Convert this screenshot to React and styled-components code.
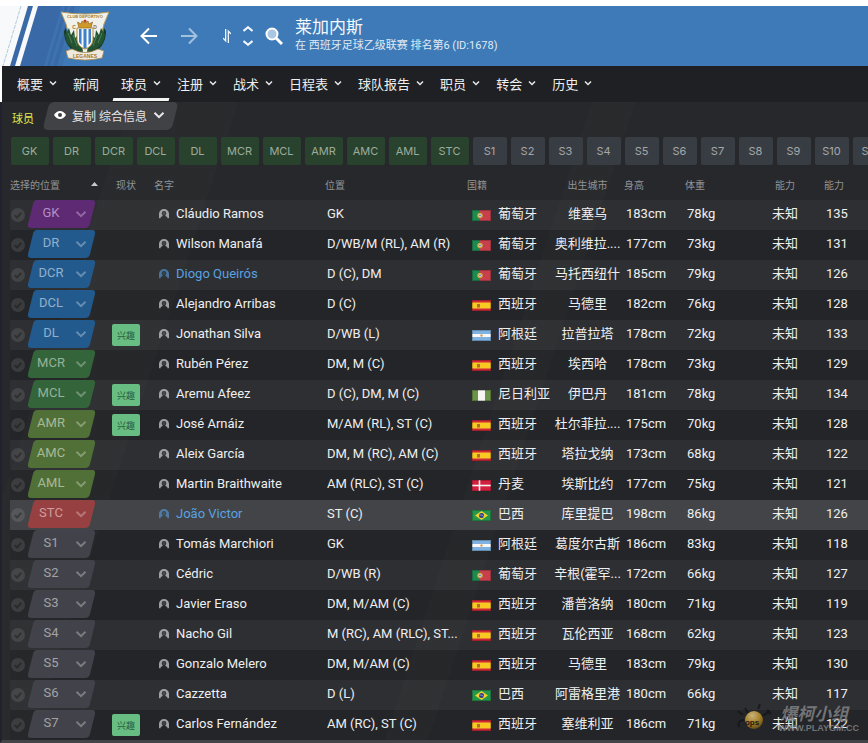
import React, { useState } from "react";
import styled, { createGlobalStyle } from "styled-components";

const players = [
  ["GK", "Cláudio Ramos", "GK", "pt", "维塞乌", 183, 78, 135],
  ["DR", "Wilson Manafá", "D/WB/M (RL), AM (R)", "pt", "奥利维拉....", 177, 73, 131],
  ["DCR", "Diogo Queirós", "D (C), DM", "pt", "马托西纽什", 185, 79, 126, "linked"],
  ["DCL", "Alejandro Arribas", "D (C)", "es", "马德里", 182, 76, 128],
  ["DL", "Jonathan Silva", "D/WB (L)", "ar", "拉普拉塔", 178, 72, 133, "interest"],
  ["MCR", "Rubén Pérez", "DM, M (C)", "es", "埃西哈", 178, 73, 129],
  ["MCL", "Aremu Afeez", "D (C), DM, M (C)", "ng", "伊巴丹", 181, 78, 134, "interest"],
  ["AMR", "José Arnáiz", "M/AM (RL), ST (C)", "es", "杜尔菲拉....", 175, 70, 128, "interest"],
  ["AMC", "Aleix García", "DM, M (RC), AM (C)", "es", "塔拉戈纳", 173, 68, 122],
  ["AML", "Martin Braithwaite", "AM (RLC), ST (C)", "dk", "埃斯比约", 177, 75, 121],
  ["STC", "João Victor", "ST (C)", "br", "库里提巴", 198, 86, 126, "linked"],
  ["S1", "Tomás Marchiori", "GK", "ar", "葛度尔古斯", 186, 83, 118],
  ["S2", "Cédric", "D/WB (R)", "pt", "辛根(霍罕...", 172, 66, 127],
  ["S3", "Javier Eraso", "DM, M/AM (C)", "es", "潘普洛纳", 180, 71, 119],
  ["S4", "Nacho Gil", "M (RC), AM (RLC), ST...", "es", "瓦伦西亚", 168, 62, 123],
  ["S5", "Gonzalo Melero", "DM, M/AM (C)", "es", "马德里", 183, 79, 130],
  ["S6", "Cazzetta", "D (L)", "br", "阿雷格里港", 180, 66, 117],
  ["S7", "Carlos Fernández", "AM (RC), ST (C)", "es", "塞维利亚", 186, 71, 122, "interest"],
];

const countries = {
  pt: "葡萄牙",
  es: "西班牙",
  ar: "阿根廷",
  ng: "尼日利亚",
  dk: "丹麦",
  br: "巴西",
};

const menus = ["概要", "新闻", "球员", "注册", "战术", "日程表", "球队报告", "职员", "转会", "历史"];

const fieldSlots = ["GK", "DR", "DCR", "DCL", "DL", "MCR", "MCL", "AMR", "AMC", "AML", "STC"];
const benchSlots = ["S1", "S2", "S3", "S4", "S5", "S6", "S7", "S8", "S9", "S10", "S11"];
const allSlots = [...fieldSlots, ...benchSlots];

const slotColor = (slot) => {
  if (slot === "GK") return { bg: "#5e2a73", fg: "#b48fc2" };
  if (/^S\d/.test(slot)) return { bg: "#42424a", fg: "#a2a2a6" };
  if (slot === "STC") return { bg: "#964042", fg: "#d09c9d" };
  if (slot.startsWith("AM")) return { bg: "#517037", fg: "#a9b998" };
  if (slot.startsWith("M")) return { bg: "#346439", fg: "#97b29a" };
  return { bg: "#235a8d", fg: "#92b0cc" };
};

function Chevron({ size = 8, color = "#e8e9ea", width = 2 }) {
  return (
    <svg width={size} height={size} viewBox="0 0 12 12" fill="none" aria-hidden="true">
      <path d="M1.5 3.8 6 8.2 10.5 3.8" stroke={color} strokeWidth={(width * 12) / size} />
    </svg>
  );
}

function Crest() {
  return (
    <svg width="50" height="50" viewBox="0 0 50 50" role="img" aria-label="CD Leganés">
      <path d="M1 1Q25 5 49 1L44 13 38 37 32 46 25 49 18 46 12 37 6 13Z" fill="#f1f1ec" stroke="#b49a5c" strokeWidth="1" />
      <text x="25" y="7" textAnchor="middle" fontSize="4" fontWeight="700" fill="#a67b22" fontFamily="Liberation Sans, sans-serif">CLUB DEPORTIVO</text>
      <text x="14" y="18" textAnchor="middle" fontSize="5" fontWeight="700" fill="#9c7628" fontFamily="Liberation Sans, sans-serif">C</text>
      <text x="35" y="18" textAnchor="middle" fontSize="5" fontWeight="700" fill="#9c7628" fontFamily="Liberation Sans, sans-serif">D</text>
      <path d="M19 17 17.5 11 21 13 22 10 25 12 28 10 29 13 32.5 11 31 17Z" fill="#d09a2a" stroke="#8a5a1a" strokeWidth=".6" />
      <circle cx="25" cy="10" r="1.5" fill="#b8402a" />
      <path d="M6 17Q7 34 23 41L22 44Q4 38 4 20ZM44 17Q43 34 27 41L28 44Q46 38 46 20Z" fill="#173b22" />
      <path d="M5 24 9 17 11 24 14 19 15 27 17 25 18 32 22 34 23 41 14 38 7 32ZM45 24 41 17 39 24 36 19 35 27 33 25 32 32 28 34 27 41 36 38 43 32Z" fill="#245333" />
      <path d="M8 22 12 32M13 24 17 35M42 22 38 32M37 24 33 35" stroke="#4a8055" strokeWidth="1" />
      <path d="M17 17h16v12q-1 7-8 9-7-2-8-9Z" fill="#f5f8fc" stroke="#b78c35" strokeWidth="1" />
      <path d="M19 18h2.5v16L19 31ZM23.5 18h3v19l-1.5.6-1.5-.6ZM28.5 18H31v13l-2.5 3Z" fill="#3f7fc6" />
      <path d="M6 40 12 38Q25 45 38 38L44 40 42 47Q25 51 8 47Z" fill="#eeeae0" stroke="#a7884d" strokeWidth=".8" />
      <text x="25" y="47" textAnchor="middle" fontSize="5" fontWeight="700" fill="#a9782a" fontFamily="Liberation Sans, sans-serif">LEGANES</text>
    </svg>
  );
}

// 左上角斜条
function Stripes() {
  return (
    <StripeArt width="80" height="60" viewBox="0 0 80 60" aria-hidden="true">
      <path d="M0 0H80L62 60H0Z" fill="#3a69a8" />
      <path d="M62 0h3L47 60h-3ZM68 0h3L53 60h-3ZM75 0h5L62 60h-5Z" fill="#3d7ab6" opacity=".6" />
      <path d="M0 0H28L10 60H0Z" fill="#f8f9fa" />
      <path d="M33 0h5L20 60h-5Z" fill="#f8f9fa" />
      <path d="M21 0 3 60" stroke="#b3c9df" strokeDasharray="4 1" />
    </StripeArt>
  );
}

function Flag({ code }) {
  return (
    <svg width="19" height="11" viewBox="0 0 19 11" aria-hidden="true">
      {code === "pt" && (
        <>
          <path d="M0 0h8v11H0z" fill="#1f8a50" />
          <path d="M8 0h11v11H8z" fill="#c8404c" />
          <circle cx="8" cy="5.5" r="2.8" fill="#c9a637" />
          <circle cx="8" cy="5.5" r="1.5" fill="#d9dbe6" />
          <circle cx="8" cy="5.5" r=".8" fill="#4a5fb0" />
        </>
      )}
      {code === "es" && (
        <>
          <path d="M0 0h19v11H0z" fill="#cf2837" />
          <path d="M0 2.5h19v6H0z" fill="#f8c922" />
          <path d="M5 4h3v3.5H5z" fill="#b0702c" />
        </>
      )}
      {code === "ar" && (
        <>
          <path d="M0 0h19v11H0z" fill="#7fb2e0" />
          <path d="M0 4h19v3H0z" fill="#f7f8f9" />
          <circle cx="9.5" cy="5.5" r="1.2" fill="#d9a050" />
        </>
      )}
      {code === "ng" && (
        <>
          <path d="M0 0h19v11H0z" fill="#6b9447" />
          <path d="M6 0h7v11H6z" fill="#f5f5f2" />
        </>
      )}
      {code === "dk" && (
        <>
          <path d="M0 0h19v11H0z" fill="#d3203f" />
          <path d="M7 0h1v11H7zM0 5h19v1H0z" fill="#f7f2f2" stroke="#f7f2f2" strokeWidth=".6" />
        </>
      )}
      {code === "br" && (
        <>
          <path d="M0 0h19v11H0z" fill="#25964a" />
          <path d="M9.5 1 16 5.5 9.5 10 3 5.5z" fill="#f0d22f" />
          <circle cx="9.5" cy="5.5" r="2.5" fill="#29398a" />
          <path d="M7.3 5Q10 4.7 11.7 6.4" stroke="#d8deee" strokeWidth=".6" fill="none" />
        </>
      )}
      <path d="M.5.5h18v10H.5z" fill="none" stroke="#000" strokeOpacity=".22" />
    </svg>
  );
}

function Tick() {
  return (
    <svg width="14" height="14" viewBox="0 0 14 14" aria-hidden="true">
      <circle cx="7" cy="7" r="7" fill="#fff" fillOpacity=".1" />
      <path d="M3.8 7.3 6.1 9.5 10.2 4.8" stroke="#000" strokeOpacity=".3" strokeWidth="2" fill="none" />
    </svg>
  );
}

// 圆形底 + 镂空头像
function Person() {
  return (
    <svg width="10" height="10" viewBox="0 0 10 10" aria-hidden="true">
      <path
        fill="currentColor"
        d="M5 0a5 5 0 0 1 5 5v4L8.800 9.500Q8.600 7.600 6.400 7V6.200Q7.300 5.400 7.300 4.200 7.300 2 5 2 2.700 2 2.700 4.200 2.700 5.400 3.600 6.200V7Q1.400 7.600 1.200 9.500L0 9V5A5 5 0 0 1 5 0Z"
      />
      <path fill="currentColor" fillOpacity=".25" d="M3.4 4.2a1.6 1.6 0 0 1 3.2 0 1.6 2 0 0 1-3.2 0Z" />
    </svg>
  );
}

function SlotSelect({ slot, name }) {
  const [value, setValue] = useState(slot);
  const color = slotColor(value);

  return (
    <SlotBox>
      <SlotShape width="67" height="28" viewBox="0 0 67 28" preserveAspectRatio="none" aria-hidden="true">
        <path d="M9 0H64Q68 0 67 4L62 24Q61 28 57 28H3Q-1 28 0 24L5 4Q6 0 9 0Z" fill={color.bg} />
      </SlotShape>
      <SlotField $fg={color.fg} aria-label={`${name} 位置`} value={value} onChange={(e) => setValue(e.target.value)}>
        {allSlots.map((s) => (
          <option key={s}>{s}</option>
        ))}
      </SlotField>
      <SlotArrow>
        <Chevron size={12} color={color.fg} width={2} />
      </SlotArrow>
    </SlotBox>
  );
}

function PlayerRow({ player }) {
  const [slot, name, role, nation, city, height, weight, ability, flag] = player;
  const [checked, setChecked] = useState(false);

  return (
    <Row $selected={slot === "STC"}>
      <ControlCell>
        <SlotCell>
          <CheckLabel>
            <input type="checkbox" aria-label={name} checked={checked} onChange={() => setChecked(!checked)} />
            <Tick />
          </CheckLabel>
          <SlotSelect slot={slot} name={name} />
        </SlotCell>
      </ControlCell>
      <ControlCell>{flag === "interest" && <Interest>兴趣</Interest>}</ControlCell>
      <Cell>
        <NameLink href="#" $linked={flag === "linked"}>
          <Person />
          <span>{name}</span>
        </NameLink>
      </Cell>
      <Cell>{role}</Cell>
      <Cell>
        <Nation>
          <Flag code={nation} />
          {countries[nation]}
        </Nation>
      </Cell>
      <Cell $center>{city}</Cell>
      <Cell>{height}cm</Cell>
      <Cell>{weight}kg</Cell>
      <Cell $center>未知</Cell>
      <Cell>{ability}</Cell>
    </Row>
  );
}

function App() {
  return (
    <Page>
      <GlobalStyle />
      <Header>
        <Stripes />
        <Crest />
        <HistoryButtons>
          <IconButton aria-label="后退">
            <svg width="18" height="18" viewBox="0 0 18 18" fill="none" stroke="#fff" strokeWidth="2">
              <path d="M17 9H2M9 1.5 1.5 9 9 16.5" />
            </svg>
          </IconButton>
          <IconButton aria-label="前进">
            <svg width="18" height="18" viewBox="0 0 18 18" fill="none" stroke="#a3c1df" strokeWidth="2">
              <path d="M1 9h15M9 1.5 16.5 9 9 16.5" />
            </svg>
          </IconButton>
        </HistoryButtons>
        <ToolButtons>
          <IconButton aria-label="切换">
            <svg width="8" height="14" viewBox="0 0 8 14" fill="#eef4fa">
              <path d="M2 0h1.300v13.500L0 10V8.500l2 1.500ZM6 14H4.700V.5L8 4v1.500L6 4Z" />
            </svg>
          </IconButton>
          <IconButton aria-label="上下">
            <svg width="10" height="20" viewBox="0 0 10 20" fill="none" stroke="#f4f8fc" strokeWidth="2">
              <path d="M.5 5 5 1.2 9.5 5M.5 15 5 18.8 9.5 15" />
            </svg>
          </IconButton>
          <IconButton aria-label="搜索">
            <svg width="18" height="18" viewBox="0 0 18 18">
              <path d="M11 11 17 17" stroke="#fff" strokeWidth="3" />
              <circle cx="7" cy="7" r="5.5" fill="#a9c6e2" stroke="#fff" strokeWidth="2" />
            </svg>
          </IconButton>
        </ToolButtons>
        <Title>
          <h1>莱加内斯</h1>
          <p>在 西班牙足球乙级联赛 排名第6 (ID:1678)</p>
        </Title>
      </Header>

      <Nav>
        {menus.map((menu) => (
          <NavLink key={menu} href="#" $active={menu === "球员"}>
            <span>{menu}</span>
            {menu !== "新闻" && <Chevron width={1.5} />}
          </NavLink>
        ))}
      </Nav>

      <Main>
        <ViewBar>
          <ViewTitle>球员</ViewTitle>
          <ViewButton>
            <svg width="12" height="10" viewBox="0 0 12 10" aria-hidden="true">
              <path d="M0 5Q2.5 1 6 1T12 5Q9.5 9 6 9T0 5Z" fill="#fff" />
              <circle cx="6" cy="5" r="2" fill="#3f4044" />
            </svg>
            <span>复制 综合信息</span>
            <Chevron size={12} />
          </ViewButton>
        </ViewBar>

        <Slots>
          {fieldSlots.map((slot) => (
            <SlotChip key={slot} $field>{slot}</SlotChip>
          ))}
          {benchSlots.map((slot) => (
            <SlotChip key={slot}>{slot}</SlotChip>
          ))}
        </Slots>

        <Squad>
          <colgroup>
            <col style={{ width: 102 }} />
            <col style={{ width: 40 }} />
            <col style={{ width: 171 }} />
            <col style={{ width: 142 }} />
            <col style={{ width: 88 }} />
            <col style={{ width: 69 }} />
            <col style={{ width: 61 }} />
            <col style={{ width: 65 }} />
            <col style={{ width: 74 }} />
            <col />
          </colgroup>
          <thead>
            <tr>
              <Head>
                <SortHead>
                  选择的位置
                  <svg width="7" height="4" viewBox="0 0 7 4" aria-hidden="true">
                    <path d="M0 4 3.5 0 7 4Z" fill="#c9cacc" />
                  </svg>
                </SortHead>
              </Head>
              <Head>
                <StatusHead>现状</StatusHead>
              </Head>
              <Head>名字</Head>
              <Head>位置</Head>
              <Head>国籍</Head>
              <Head $center>出生城市</Head>
              <Head>身高</Head>
              <Head>体重</Head>
              <Head $center>能力</Head>
              <Head>能力</Head>
            </tr>
          </thead>
          <tbody>
            {players.map((player) => (
              <PlayerRow key={player[0]} player={player} />
            ))}
          </tbody>
        </Squad>
      </Main>

      <Watermark>
        <svg width="36" height="32" viewBox="0 0 36 32" aria-hidden="true">
          <defs>
            <radialGradient id="ball" cx=".4" cy=".25" r=".8">
              <stop offset="0" stopColor="#f0d68e" />
              <stop offset=".55" stopColor="#c9982a" />
              <stop offset="1" stopColor="#6a4d13" />
            </radialGradient>
          </defs>
          <path d="M9 5 12 10M22 6 24 1M2 8 7 12M25 14 34 8M31 7l4 4M3 24Q1 17 8 17" stroke="#151618" strokeWidth="2" fill="none" />
          <circle cx="18" cy="17" r="9" fill="url(#ball)" />
          <text x="16" y="22" textAnchor="middle" fontSize="8" fontWeight="700" fontFamily="Liberation Sans, sans-serif" fill="#18150e">ops</text>
        </svg>
        <div>
          <strong>爆柯小组</strong>
          <small>WWW.PLAYGM.CC</small>
        </div>
      </Watermark>
    </Page>
  );
}

const GlobalStyle = createGlobalStyle`
  * {
    box-sizing: border-box;
  }

  body {
    margin: 0;
    background: #fff;
    font-family: Roboto, "Noto Sans CJK SC", sans-serif;
    font-size: 13px;
    color: #eeeff0;
  }

  button, select {
    font-family: inherit;
  }

  a {
    color: inherit;
    text-decoration: none;
  }
`;

const Page = styled.div`
  position: relative;
  display: flex;
  flex-direction: column;
  height: 100vh;
  padding-top: 6px;
  overflow: hidden;
`;

// 1.顶部球队栏
const Header = styled.header`
  position: relative;
  display: flex;
  flex: none;
  align-items: center;
  height: 60px;
  padding-left: 60px;
  background: #3d7ab7;

  > * {
    position: relative;
  }
`;

const StripeArt = styled.svg`
  && {
    position: absolute;
    left: 0;
    top: 0;
  }
`;

const IconButton = styled.button`
  display: flex;
  padding: 0;
  border: none;
  background: none;
  cursor: pointer;
`;

const HistoryButtons = styled.div`
  display: flex;
  gap: 22px;
  margin-left: 30px;
`;

const ToolButtons = styled.div`
  display: flex;
  align-items: center;
  gap: 12px;
  margin-left: 25px;
`;

const Title = styled.div`
  margin-left: 12px;

  h1 {
    margin: 0;
    font-size: 17px;
    line-height: 20px;
    font-weight: 400;
    color: #f3f7fb;
  }

  p {
    margin: 0;
    font-size: 11px;
    line-height: 18px;
    color: #dfeaf4;
  }
`;

// 2.主菜单
const Nav = styled.nav`
  display: flex;
  flex: none;
  height: 36px;
  margin-left: 2px;
  padding-left: 7px;
  background: #1f2023;
`;

const NavLink = styled.a`
  position: relative;
  display: flex;
  align-items: center;
  padding: 0 8px 2px;
  white-space: nowrap;

  span {
    margin-right: 6px;
  }

  &::after {
    content: "";
    display: ${(props) => (props.$active ? "block" : "none")};
    position: absolute;
    left: 0;
    right: 0;
    bottom: 1px;
    height: 3px;
    background: #f4f4f4;
    transform: skewX(-14deg);
  }
`;

const Main = styled.main`
  flex: 1;
  min-height: 0;
  overflow: hidden;
  padding-left: 8px;
  border-left: 2px solid #22222e;
  background:
    linear-gradient(108deg, transparent 12%, rgba(255, 255, 255, 0.01) 12% 22%, transparent 22% 55%, rgba(255, 255, 255, 0.01) 55% 59%, transparent 59%),
    #27282b;
  border-bottom: 3px solid #434447;
`;

// 3.视图切换
const ViewBar = styled.div`
  display: flex;
  align-items: center;
  height: 28px;
`;

const ViewTitle = styled.h2`
  margin: 4px 13px 0 2px;
  font-size: 11px;
  font-weight: 400;
  color: #e2ea4a;
`;

const ViewButton = styled.button`
  position: relative;
  z-index: 0;
  display: flex;
  align-items: center;
  gap: 6px;
  height: 28px;
  padding: 0 10px 2px 7px;
  border: none;
  background: none;
  color: #e6e6e7;
  font-size: 12px;

  &::before {
    content: "";
    position: absolute;
    z-index: -1;
    inset: 0 0 0 -1px;
    border-radius: 5px;
    background: #414246;
    transform: skewX(-14deg);
  }
`;

// 4.位置按钮
const Slots = styled.div`
  display: flex;
  gap: 4px;
  margin-top: 7px;
  padding-left: 1px;
  overflow: hidden;
`;

const SlotChip = styled.button`
  flex: none;
  width: ${(props) => (props.$field ? "38px" : "34px")};
  height: 28px;
  padding: 0 1px 0 0;
  border: none;
  border-radius: 2px;
  background: ${(props) => (props.$field ? "#29422d" : "#383d43")};
  color: ${(props) => (props.$field ? "#9bac9d" : "#a5a8ab")};
  font-family: Inter, sans-serif;
  font-size: 11px;
`;

// 5.球员表格
const Squad = styled.table`
  width: 100%;
  table-layout: fixed;
  border-collapse: collapse;
`;

const Head = styled.th`
  height: 35px;
  padding: 3px 2px 0;
  font-size: 10px;
  font-weight: 400;
  color: #929395;
  text-align: ${(props) => (props.$center ? "center" : "left")};
  white-space: nowrap;

  &:first-child {
    padding-left: 0;
  }
`;

const SortHead = styled.div`
  display: flex;
  align-items: center;
  justify-content: space-between;
  padding-right: 12px;
`;

const StatusHead = styled.div`
  padding-left: 2px;
`;

const Row = styled.tr`
  background: rgba(0, 0, 0, 0.06);

  &:nth-child(odd) {
    background: rgba(255, 255, 255, 0.035);
  }

  && {
    ${(props) => props.$selected && "background: #434447;"}
  }
`;

const Cell = styled.td`
  height: 30px;
  padding: ${(props) => (props.$center ? "0 0 2px" : "0 0 2px 4px")};
  overflow: hidden;
  white-space: nowrap;
  line-height: 16px;
  text-align: ${(props) => (props.$center ? "center" : "left")};
`;

const ControlCell = styled.td`
  height: 30px;
  padding: 0;
`;

const SlotCell = styled.div`
  display: flex;
  align-items: center;
  gap: 3px;
  padding-left: 1px;
`;

const CheckLabel = styled.label`
  position: relative;
  display: flex;

  input {
    position: absolute;
    inset: 0;
    margin: 0;
    opacity: 0;
  }
`;

const SlotBox = styled.div`
  position: relative;
  width: 67px;
  height: 28px;
  margin-bottom: 2px;
`;

const SlotShape = styled.svg`
  position: absolute;
  inset: 0;
`;

const SlotField = styled.select`
  position: relative;
  display: block;
  width: 100%;
  height: 26px;
  padding: 0 21px 2px 0;
  appearance: none;
  border: none;
  outline: none;
  background: none;
  color: ${(props) => props.$fg};
  font-size: 13px;
  text-align: center;
  text-align-last: center;
`;

const SlotArrow = styled.span`
  position: absolute;
  right: 8px;
  top: 8px;
  display: flex;
  opacity: 0.6;
  pointer-events: none;
`;

const Interest = styled.span`
  display: flex;
  align-items: center;
  justify-content: center;
  width: 28px;
  height: 22px;
  border-radius: 2px;
  background: #67bd82;
  color: #2b5c3c;
  font-size: 9px;
`;

const NameLink = styled.a`
  display: flex;
  align-items: center;
  gap: 7px;
  padding-left: 3px;
  color: ${(props) => (props.$linked ? "#58a2e2" : "#eeeff0")};

  svg {
    opacity: 0.6;
  }
`;

const Nation = styled.div`
  display: flex;
  align-items: center;
  gap: 7px;
  padding-left: 3px;

  svg {
    margin-top: 2px;
  }
`;

// 6.右下角水印
const Watermark = styled.div`
  position: absolute;
  right: 9px;
  bottom: 8px;
  display: flex;
  align-items: center;
  gap: 6px;
  opacity: 0.8;
  pointer-events: none;
  color: #86878a;

  strong, small {
    display: block;
  }

  strong {
    padding-left: 2px;
    font-size: 17px;
    line-height: 18px;
    font-style: italic;
  }

  small {
    font-family: "Liberation Sans", sans-serif;
    font-size: 9px;
    line-height: 10px;
    font-weight: 700;
  }
`;

export default App;
